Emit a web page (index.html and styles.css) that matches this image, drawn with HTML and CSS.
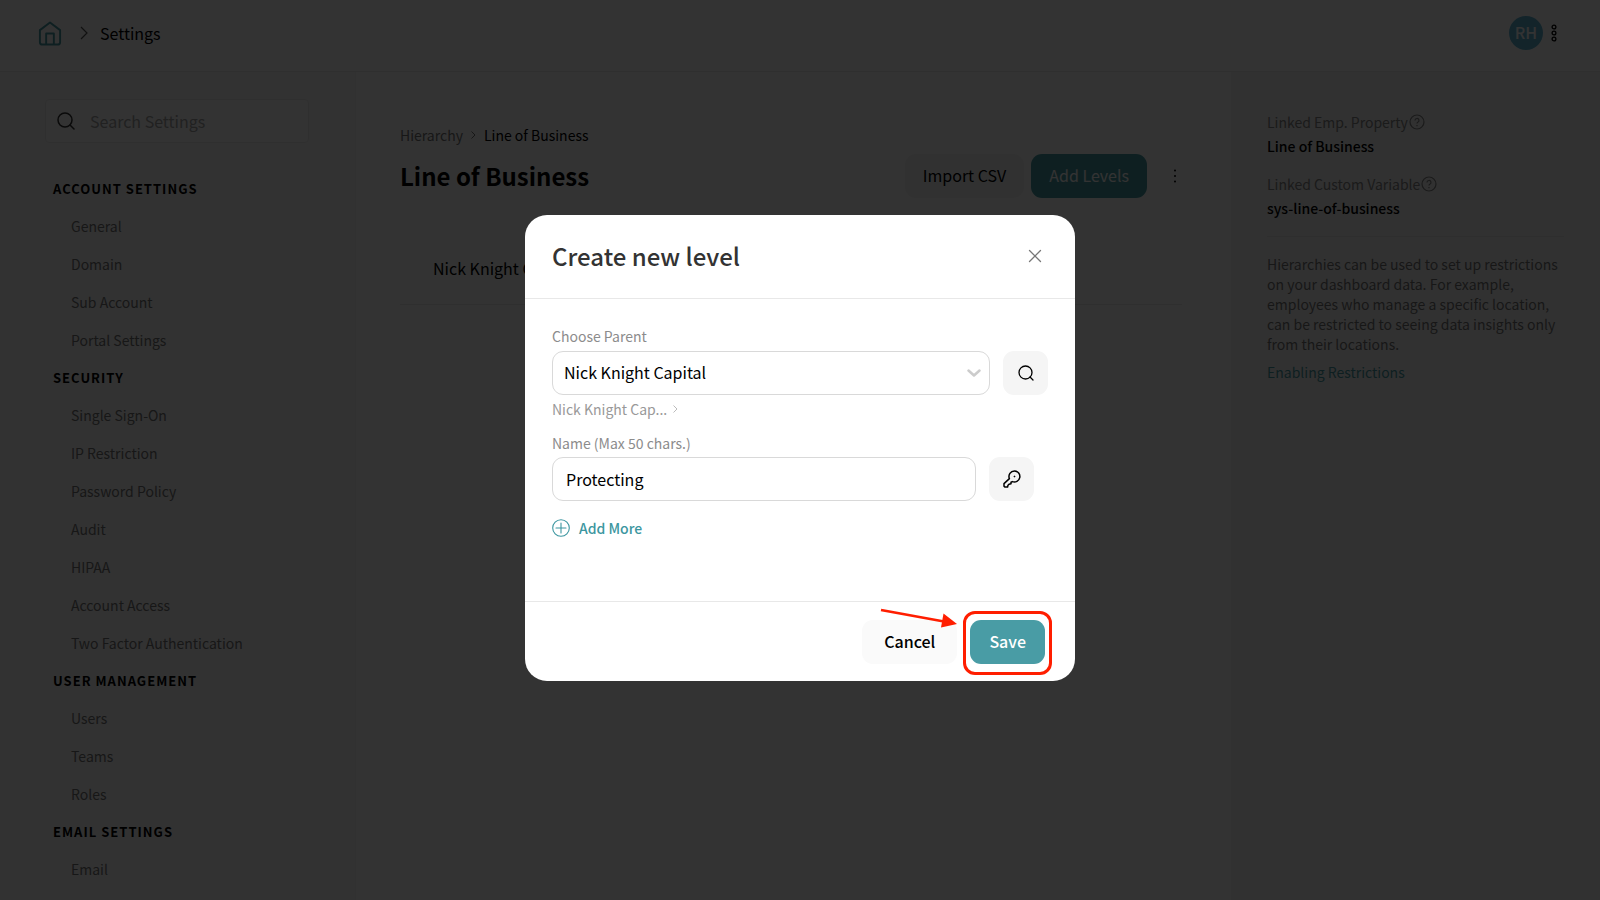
FILE: index.html
```html
<!DOCTYPE html>
<html lang="en">
<head>
    <meta charset="UTF-8">
    <meta name="viewport" content="width=device-width, initial-scale=1.0">
    <title>Settings - Line of Business</title>
    <link rel="stylesheet" href="styles.css">
</head>
<body>
    <header class="topbar">
        <a href="#" class="home-link" aria-label="Home">
            <svg width="24" height="25" viewBox="0 0 24 26" fill="none" stroke="currentColor" stroke-width="2" stroke-linejoin="round">
                <path d="M1.5 9.5 12 1.5l10.500 8V22a2.500 2.500 0 0 1-2.500 2.500H4A2.500 2.500 0 0 1 1.500 22z"/>
                <path d="M8 24.500V13h8v11.500"/>
            </svg>
        </a>
        <svg class="crumb-arrow" width="8" height="14" viewBox="0 0 8 14" fill="none" stroke="currentColor" stroke-width="1.200"><path d="M1 1l6 6-6 6"/></svg>
        <span class="topbar-title">Settings</span>
        <div class="account">
            <span class="avatar">RH</span>
            <button class="icon-btn" aria-label="More">
                <svg width="6" height="18" viewBox="0 0 6 18" fill="none" stroke="currentColor" stroke-width="1.300">
                    <circle cx="3" cy="3" r="1.900"/><circle cx="3" cy="9" r="1.900"/><circle cx="3" cy="15" r="1.900"/>
                </svg>
            </button>
        </div>
    </header>

    <div class="layout">
        <nav class="sidebar">
            <label class="search">
                <svg width="18" height="18" viewBox="0 0 18 18" fill="none" stroke="currentColor" stroke-width="1.500" stroke-linecap="round"><circle cx="8" cy="8" r="7"/><path d="M13 13l4 4"/></svg>
                <input type="text" placeholder="Search Settings" aria-label="Search Settings">
            </label>
            <h2>Account Settings</h2>
            <a href="#">General</a>
            <a href="#">Domain</a>
            <a href="#">Sub Account</a>
            <a href="#">Portal Settings</a>
            <h2>Security</h2>
            <a href="#">Single Sign-On</a>
            <a href="#">IP Restriction</a>
            <a href="#">Password Policy</a>
            <a href="#">Audit</a>
            <a href="#">HIPAA</a>
            <a href="#">Account Access</a>
            <a href="#">Two Factor Authentication</a>
            <h2>User Management</h2>
            <a href="#">Users</a>
            <a href="#">Teams</a>
            <a href="#">Roles</a>
            <h2>Email Settings</h2>
            <a href="#">Email</a>
        </nav>

        <main class="content">
            <div class="breadcrumb">
                <a href="#">Hierarchy</a>
                <svg width="5" height="8" viewBox="0 0 5 8" fill="none" stroke="currentColor"><path d="M.5.500 4 4 .5 7.500"/></svg>
                <span>Line of Business</span>
            </div>
            <div class="title-row">
                <h1>Line of Business</h1>
                <button class="btn btn-light">Import CSV</button>
                <button class="btn btn-primary">Add Levels</button>
                <button class="icon-btn" aria-label="More options">
                    <svg width="4" height="14" viewBox="0 0 4 14" fill="currentColor"><circle cx="2" cy="1.500" r="1"/><circle cx="2" cy="7" r="1"/><circle cx="2" cy="12.500" r="1"/></svg>
                </button>
            </div>
            <div class="level-row">Nick Knight Capital</div>
        </main>

        <aside class="info">
            <div class="info-label">Linked Emp. Property
                <svg width="16" height="16" viewBox="0 0 16 16" fill="none" stroke="currentColor" stroke-width="1.200"><circle cx="8" cy="8" r="7"/><path d="M6 6.500a2 2 0 1 1 2.800 1.800q-.8.400-.8 1.300M8 11v1.200"/></svg>
            </div>
            <div class="info-value">Line of Business</div>
            <div class="info-label">Linked Custom Variable
                <svg width="16" height="16" viewBox="0 0 16 16" fill="none" stroke="currentColor" stroke-width="1.200"><circle cx="8" cy="8" r="7"/><path d="M6 6.500a2 2 0 1 1 2.800 1.800q-.8.400-.8 1.300M8 11v1.200"/></svg>
            </div>
            <div class="info-value">sys-line-of-business</div>
            <p>Hierarchies can be used to set up restrictions on your dashboard data. For example, employees who manage a specific location, can be restricted to seeing data insights only from their locations.</p>
            <a href="#">Enabling Restrictions</a>
        </aside>
    </div>

    <div class="overlay">
        <form class="modal" role="dialog" aria-labelledby="modal-title">
            <div class="modal-header">
                <h2 id="modal-title">Create new level</h2>
                <button type="button" class="icon-btn close" aria-label="Close">
                    <svg width="14" height="14" viewBox="0 0 14 14" fill="none" stroke="currentColor" stroke-width="1.300" stroke-linecap="round"><path d="M1.500 1.500l11 11M12.500 1.500l-11 11"/></svg>
                </button>
            </div>
            <div class="modal-body">
                <label for="parent">Choose Parent</label>
                <div class="field">
                    <div class="select-wrap">
                        <select id="parent">
                            <option>Nick Knight Capital</option>
                        </select>
                        <svg width="14" height="8" viewBox="0 0 14 8" fill="none" stroke="currentColor" stroke-width="2.500" stroke-linecap="round" stroke-linejoin="round"><path d="M1.500 1.500 7 6.500l5.500-5"/></svg>
                    </div>
                    <button type="button" class="square-btn" aria-label="Search">
                        <svg width="16" height="16" viewBox="0 0 16 16" fill="none" stroke="currentColor" stroke-width="1.300" stroke-linecap="round"><circle cx="7.500" cy="7.500" r="6.500"/><path d="M12 12l3 3"/></svg>
                    </button>
                </div>
                <div class="path">Nick Knight Cap...
                    <svg width="5" height="8" viewBox="0 0 5 8" fill="none" stroke="currentColor"><path d="M.5.500 4 4 .5 7.500"/></svg>
                </div>
                <label for="name">Name (Max 50 chars.)</label>
                <div class="field field-name">
                    <input type="text" id="name" value="Protecting" maxlength="50">
                    <button type="button" class="square-btn" aria-label="Key">
                        <svg width="18" height="18" viewBox="0 0 18 18" fill="none" stroke="currentColor" stroke-width="1.500" stroke-linejoin="round">
                            <path d="M11.500 1a5.500 5.500 0 1 1-2.200 10.600L8 12.200v1.500L6 14.200l-1 1-.4 1.800H1.800L1 16.200v-2.600l5.400-5A5.500 5.500 0 0 1 11.500 1z"/>
                            <circle cx="11.500" cy="6.500" r=".6" fill="currentColor" stroke-width=".6"/>
                        </svg>
                    </button>
                </div>
                <button type="button" class="add-more">
                    <svg width="18" height="18" viewBox="0 0 18 18" fill="none" stroke="currentColor" stroke-width="1.100" stroke-linecap="round"><circle cx="9" cy="9" r="8.300"/><path d="M9 4v10M4 9h10"/></svg>
                    Add More
                </button>
            </div>
            <div class="modal-footer">
                <button type="button" class="btn btn-cancel">Cancel</button>
                <div class="save-wrap">
                    <button type="submit" class="btn btn-primary btn-save">Save</button>
                    <span class="highlight"></span>
                    <svg class="pointer" width="78" height="20" viewBox="0 0 78 20"><path d="M1 2 64 13.500" stroke="#ff1e00" stroke-width="2.600"/><path d="M63.500 5.500 77 16 61 19.500z" fill="#ff1e00"/></svg>
                </div>
            </div>
        </form>
    </div>
</body>
</html>
```
FILE: styles.css
```css
* {
    box-sizing: border-box;
}

body {
    margin: 0;
    height: 100vh;
    overflow: hidden;
    display: flex;
    flex-direction: column;
    font-family: "Noto Sans CJK SC", "Noto Sans", sans-serif;
    font-size: 14px;
    line-height: 20px;
    color: #000;
    background: #fff;
}

h1, h2, p {
    margin: 0;
}

a {
    color: inherit;
    text-decoration: none;
}

button, input, select {
    font-family: inherit;
    font-size: 16px;
    color: inherit;
}

button {
    border: none;
    padding: 0;
    cursor: pointer;
}

svg {
    display: block;
    flex: none;
}

.icon-btn {
    background: none;
}

/* Top bar */
.topbar {
    flex: none;
    height: 72px;
    padding: 0 43px 5px 38px;
    display: flex;
    align-items: center;
    border-bottom: 1px solid #ebebeb;
}

.home-link {
    color: #499ca5;
}

.crumb-arrow {
    margin: 0 12px 0 18px;
    color: #555;
}

.topbar-title {
    font-size: 16px;
}

.account {
    margin-left: auto;
    display: flex;
    align-items: center;
    gap: 8px;
}

.avatar {
    width: 34px;
    height: 34px;
    border-radius: 50%;
    background: #5fb4d3;
    color: #fff;
    font-size: 16px;
    font-weight: 500;
    line-height: 32px;
    text-align: center;
}

/* Page columns */
.layout {
    flex: 1;
    min-height: 0;
    display: flex;
}

.sidebar {
    width: 356px;
    padding: 27px 46px 0 45px;
    border-right: 1px solid #f2f2f2;
    background: #fafafa;
    color: #757575;
    overflow: hidden;
}

.search {
    height: 44px;
    margin-bottom: 27px;
    padding: 0 11px;
    display: flex;
    align-items: center;
    gap: 13px;
    border: 1px solid #ebebeb;
    border-radius: 4px;
    background: #fff;
    color: #333;
}

.search input {
    width: 100%;
    border: none;
    outline: none;
    background: none;
}

.search input::placeholder {
    color: #a5a5a5;
}

.sidebar h2 {
    padding-left: 8px;
    font-size: 13px;
    font-weight: 700;
    line-height: 37px;
    letter-spacing: 1px;
    text-transform: uppercase;
    color: #000;
}

.sidebar a {
    display: block;
    padding-left: 26px;
    line-height: 38px;
}

.content {
    flex: 1;
    padding: 53px 49px 0 44px;
}

.breadcrumb {
    display: flex;
    align-items: center;
    gap: 8px;
    color: #757575;
}

.breadcrumb span {
    color: #000;
}

.title-row {
    margin-top: 9px;
    display: flex;
    align-items: center;
}

.title-row h1 {
    margin-right: auto;
    font-size: 24px;
    line-height: 36px;
}

.title-row .icon-btn {
    margin: 0 5px 0 26px;
}

.btn {
    height: 44px;
    padding: 0 18px 2px;
    border-radius: 11px;
}

.btn-light {
    margin-right: 7px;
    background: #f5f5f5;
}

.btn-primary {
    background: #499ca5;
    color: #fff;
}

.level-row {
    margin-top: 35px;
    padding: 24px 33px;
    border-bottom: 1px solid #ebebeb;
    font-size: 16px;
    line-height: 23px;
}

.info {
    width: 369px;
    padding: 40px 36px 0;
    background: #f5f5f5;
    color: #757575;
}

.info-label {
    display: flex;
    align-items: center;
    gap: 1px;
    color: #858585;
}

.info-value {
    margin: 4px 0 18px;
    font-weight: 500;
    color: #000;
}

.info p {
    padding-top: 17px;
    margin: 18px 0 8px;
    border-top: 1px solid #e6e6e6;
}

.info > a {
    color: #499ca5;
}

/* Create level dialog */
.overlay {
    position: fixed;
    inset: 0;
    display: flex;
    justify-content: center;
    align-items: flex-start;
    padding-top: 215px;
    background: rgba(0, 0, 0, 0.8);
}

.modal {
    width: 550px;
    border-radius: 22px;
    background: #fff;
}

.modal-header {
    height: 84px;
    padding: 0 33px 2px 27px;
    display: flex;
    align-items: center;
    justify-content: space-between;
    border-bottom: 1px solid #e8e8e8;
}

.modal-header h2 {
    font-size: 24px;
    font-weight: 500;
    line-height: 36px;
    color: #333;
}

.close {
    color: #777;
}

.modal-body {
    padding: 27px 27px 63px;
}

.modal-body label {
    display: block;
    color: #8c8c8c;
}

.field {
    margin-top: 5px;
    display: flex;
    gap: 13px;
}

.field-name {
    margin-top: 4px;
    padding-right: 14px;
}

.select-wrap {
    position: relative;
    flex: 1;
}

.select-wrap svg {
    position: absolute;
    right: 9px;
    top: 18px;
    color: #ccc;
    pointer-events: none;
}

.field select, .field input {
    width: 100%;
    height: 44px;
    padding: 0 11px 2px;
    border: 1px solid #d9d9d9;
    border-radius: 11px;
    background: #fff;
    appearance: none;
    outline: none;
}

.field input {
    flex: 1;
    padding: 0 13px;
}

.square-btn {
    flex: none;
    width: 45px;
    height: 44px;
    display: flex;
    align-items: center;
    justify-content: center;
    border-radius: 11px;
    background: #f5f5f5;
}

.path {
    margin: 4px 0 14px;
    display: flex;
    align-items: center;
    gap: 6px;
    color: #999;
}

.path svg {
    color: #bbb;
}

.add-more {
    margin-top: 17px;
    display: flex;
    align-items: center;
    gap: 9px;
    background: none;
    color: #3c96a0;
    font-size: 14px;
    font-weight: 500;
    line-height: 20px;
}

.modal-footer {
    padding: 18px 30px 17px;
    display: flex;
    justify-content: flex-end;
    gap: 13px;
    border-top: 1px solid #e8e8e8;
}

.btn-cancel {
    padding: 0 22px 2px;
    background: #fafafa;
    font-weight: 500;
}

.btn-save {
    padding: 0 19px 2px;
    font-weight: 500;
}

.save-wrap {
    position: relative;
}

.highlight {
    position: absolute;
    inset: -9px -7px -11px;
    border: 3px solid #ff1e00;
    border-radius: 12px;
}

.pointer {
    position: absolute;
    right: 87px;
    top: -12px;
}
```
